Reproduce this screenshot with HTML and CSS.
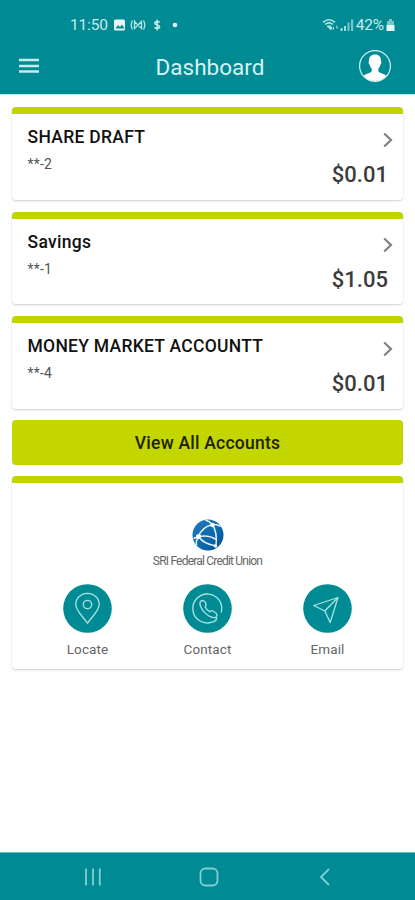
FILE: index.html
```html
<!DOCTYPE html>
<html lang="en">
<head>
<meta charset="utf-8">
<title>Dashboard</title>
<link rel="stylesheet" href="styles.css">
</head>
<body>
<header class="top">
  <div class="status">
    <span class="time">11:50</span>
    <svg class="notes" width="68" height="14" viewBox="0 0 68 14">
      <rect x="1" y="1.500" width="11" height="11" rx="1.500" fill="#e3f7f7"/>
      <path d="M2.500 10.500l2.500-3.500 2 2 2-2.500 2.500 4z" fill="#008b94"/>
      <g fill="none" stroke="#b5e4e5" stroke-width="1.300"><path d="M19.500 2.500q-2.500 4.500 0 9M30.500 2.500q2.500 4.500 0 9M21.500 11.500v-8l7 7v-8M28.500 3.500l-7 7M21.500 3v-1M28.500 11.500v-3"/></g>
      <path d="M46.500 4.500c-.5-1.200-4.600-1.500-4.600.7 0 2.300 4.700 1.200 4.700 3.600 0 2.200-4.500 2-5 .4M44.200 1.500v11" fill="none" stroke="#c8eeee" stroke-width="1.500"/>
      <circle cx="62" cy="7" r="2.300" fill="#e3f7f7"/>
    </svg>
    <svg class="signal" width="34" height="14" viewBox="0 0 34 14">
      <g fill="none" stroke="#b5e4e5" stroke-width="1.500"><path d="M1 4.300q6-5 12 0M3 6.500q4-3.300 8 0M5 8.700q2-1.600 4 0"/></g>
      <path d="M5.500 9l3.500 3.500 1.500-3.500zM12 12.500v-4l-1.500 1.500M14.500 7v4l1.500-1.500" fill="#b5e4e5"/>
      <path d="M18.500 10h2v3h-2zM22 8h2v5h-2z" fill="#a5dcde"/><path d="M25.500 4.500h2V13h-2zM29 1.500h2.200V13H29z" fill="#7cc5c9"/>
    </svg>
    <span class="pct">42%</span>
    <svg width="9" height="13" viewBox="0 0 9 13"><path d="M3 0h3v2h2v4H1V2h2z" fill="#7cc5c9"/><path d="M.5 6h8v6h-8z" fill="#e3f7f7"/></svg>
  </div>
  <div class="bar">
    <svg class="burger" width="20" height="16" viewBox="0 0 20 16"><path d="M0 2h20M0 8h20M0 13.500h20" stroke="#c5ebeb" stroke-width="2.300"/></svg>
    <h1 class="title">Dashboard</h1>
    <svg class="avatar" width="34" height="34" viewBox="0 0 34 34"><circle cx="17" cy="17" r="15.400" fill="none" stroke="#d7f2f2" stroke-width="1.200"/><path d="M17 5.500c4 0 6.200 2.600 5.900 6.500 1 .2.400 3.300-.6 3.700-.4 2-1.200 3-2 4v2.800c1.200 1.800 6.500 2.100 7.900 4.600C25.700 30.300 21.500 32 17 32S8.300 30.300 5.800 27.100c1.400-2.500 6.700-2.800 7.900-4.600v-2.800c-.8-1-1.600-2-2-4-1-.4-1.600-3.500-.6-3.700-.3-3.900 1.900-6.500 5.900-6.500z" fill="#fff"/></svg>
  </div>
</header>
<main class="content">
  <section class="card account">
    <div class="info"><h2 class="name n1">SHARE DRAFT</h2><p class="mask">**-2</p></div>
    <div class="side"><svg width="10" height="16" viewBox="0 0 10 16"><path d="M1.200 1.500L8 8l-6.800 6.500" class="chev"/></svg><span class="amount">$0.01</span></div>
  </section>
  <section class="card account">
    <div class="info"><h2 class="name n2">Savings</h2><p class="mask">**-1</p></div>
    <div class="side"><svg width="10" height="16" viewBox="0 0 10 16"><path d="M1.200 1.500L8 8l-6.800 6.500" class="chev"/></svg><span class="amount">$1.05</span></div>
  </section>
  <section class="card account">
    <div class="info"><h2 class="name n3">MONEY MARKET ACCOUNTT</h2><p class="mask">**-4</p></div>
    <div class="side"><svg width="10" height="16" viewBox="0 0 10 16"><path d="M1.200 1.500L8 8l-6.800 6.500" class="chev"/></svg><span class="amount">$0.01</span></div>
  </section>
  <button class="all">View All Accounts</button>
  <section class="card contact">
    <svg class="logo" width="32" height="32" viewBox="0 0 32 32">
      <defs><linearGradient id="globe" x1="0" y1="0" x2="1" y2="1"><stop offset="0" stop-color="#247bb9"/><stop offset=".6" stop-color="#0c67ad"/><stop offset="1" stop-color="#054a8c"/></linearGradient></defs>
      <circle cx="16" cy="16" r="15.500" fill="url(#globe)"/>
      <g fill="none" stroke="#e4f2fa" stroke-width="1.500"><path d="M13 .8q5 1.700 7.500 4.700 5 8 3.500 21.500M20.500 5.500Q10 8 6.500 17.500 3.500 22 4.500 26.500M6.500 17.500Q17 15.500 24 20.500M1.500 19.500l5-2M20.500 5.500q5-.5 8 2M6.500 17.500q5 7.500 17.500 9.500"/></g>
      <circle cx="20.500" cy="6" r="2.200" fill="#fff"/><circle cx="6.500" cy="17.500" r="2.500" fill="#fff"/><circle cx="23.500" cy="27" r="1.800" fill="#fff"/>
    </svg>
    <p class="brand">SRI Federal Credit Union</p>
    <div class="actions">
      <a class="action"><svg width="49" height="49" viewBox="0 0 49 49"><circle cx="24.500" cy="24.500" r="24.300" fill="#008b94"/><g class="line"><path d="M24.500 39.200C20.500 33 12.800 27 12.800 20.500a11.700 11.200 0 0 1 23.400 0C36.200 27 28.500 33 24.500 39.200z"/><circle cx="24.500" cy="20.500" r="4.200"/></g></svg><span>Locate</span></a>
      <a class="action"><svg width="49" height="49" viewBox="0 0 49 49"><circle cx="24.500" cy="24.500" r="24.300" fill="#008b94"/><g class="line"><path d="M38.200 28.500A14.500 14.500 0 1 0 29 38.200q4.500-.8 4.800-4.800"/><path d="M22.500 18.500c-1.200-2.200-3.300-2.600-4.900-1-1.800 1.900.2 7.200 4.100 11.100 3.900 3.900 8.700 6.100 10.900 4.600 1.900-1.300 1.700-3.200.3-4.200l-3-2c-1.200-.7-2.200-.1-3 .8-1.800-.7-3.900-2.800-4.700-4.700.9-.8 1.200-2.300.3-4.600z"/></g></svg><span>Contact</span></a>
      <a class="action"><svg width="49" height="49" viewBox="0 0 49 49"><circle cx="24.500" cy="24.500" r="24.300" fill="#008b94"/><g class="line"><path d="M35 13.500L10.800 21.500l11 5.500 5.400 11.500z"/><path d="M35 13.500L21.800 27"/></g></svg><span>Email</span></a>
    </div>
  </section>
</main>
<nav class="nav">
  <svg width="18" height="18" viewBox="0 0 18 18"><path d="M2 .5v17M9 .5v17M15.800 .5v17" class="ns"/></svg>
  <svg class="home" width="20" height="20" viewBox="0 0 20 20"><rect x="1.500" y="1.500" width="17" height="17" rx="5" class="ns"/></svg>
  <svg width="12" height="18" viewBox="0 0 12 18"><path d="M10 1L2 9l8 8" class="ns"/></svg>
</nav>
</body>
</html>
```
FILE: styles.css
```css
* { box-sizing: border-box; margin: 0; padding: 0; }
body {
  width: 415px; height: 900px; overflow: hidden;
  display: flex; flex-direction: column;
  background: #fefefe; font-family: Roboto, "Liberation Sans", sans-serif;
}
svg { display: block; flex: none; }
.top { height: 95px; padding-top: 11px; background: #008b94; border-bottom: 1px solid #b4f0ee; color: #d7f2f2; flex: none; }
.status { display: flex; align-items: center; height: 28px; padding: 0 20px 0 70px; }
.time { font-size: 15.5px; letter-spacing: -0.15px; width: 43px; color: #c5ebeb; }
.signal { margin-left: auto; }
.pct { font-size: 15.5px; margin: 0 2px 0 0; letter-spacing: -0.2px; color: #c5ebeb; }
.bar { display: grid; grid-template-columns: 60px 1fr 60px; align-items: center; height: 54px; }
.burger { margin-left: 19px; }
.title { font-size: 22.5px; font-weight: 400; text-align: center; letter-spacing: 0; padding: 2px 0 0 5px; }
.avatar { justify-self: end; margin-right: 23px; }
.content { flex: 1; padding: 12px 12px 0 12px; display: flex; flex-direction: column; }
.card {
  background: #fff; border-top: 7px solid #c1d300; border-radius: 4px;
  box-shadow: 0 1px 2px 0 #cfcfcf; flex: none;
}
.account { height: 92.5px; margin-bottom: 12px; display: flex; justify-content: space-between; padding: 13px 15px 0 15.5px; }
.name { font-size: 17.5px; line-height: 21px; font-weight: 500; color: #111; white-space: nowrap; }
.n1 { letter-spacing: 0.3px; }
.n2 { letter-spacing: 0.3px; }
.n3 { letter-spacing: 0.27px; }
.mask { font-size: 14px; line-height: 18px; margin-top: 7px; color: #555; letter-spacing: 0.2px; }
.side { display: flex; flex-direction: column; align-items: flex-end; }
.side svg { margin: 5px -5px 0 0; }
.chev { fill: none; stroke: #808080; stroke-width: 2.2; }
.amount { font-size: 22px; line-height: 26px; font-weight: 500; color: #3c3c3c; margin-top: 14px; }
.all {
  height: 44.5px; margin-top: -0.5px; border: 0; border-radius: 4px; background: #c4d600; flex: none;
  font: 500 17.5px/21px Roboto, sans-serif; letter-spacing: 0.23px; color: #1d2100; padding-top: 2px;
}
.contact { height: 192.5px; margin-top: 11.5px; display: flex; flex-direction: column; align-items: center; padding-top: 36px; }
.brand { font-size: 12px; line-height: 14px; margin-top: 3px; letter-spacing: -0.8px; color: #666; white-space: nowrap; }
.actions { display: flex; gap: 40px; margin-top: 15.5px; }
.action { width: 80px; display: flex; flex-direction: column; align-items: center; }
.action span { font-size: 13.5px; line-height: 18px; margin-top: 7px; color: #666; letter-spacing: 0.1px; }
.line { fill: none; stroke: #a9e3e4; stroke-width: 1.3; stroke-linejoin: round; }
.nav { flex: none; height: 48px; background: #008b94; border-top: 1px solid #68bcc0; display: flex; align-items: center; padding: 0 84px; justify-content: space-between; }
.home { margin-right: 3px; }
.ns { fill: none; stroke: #80cfd2; stroke-width: 1.8; }
```
